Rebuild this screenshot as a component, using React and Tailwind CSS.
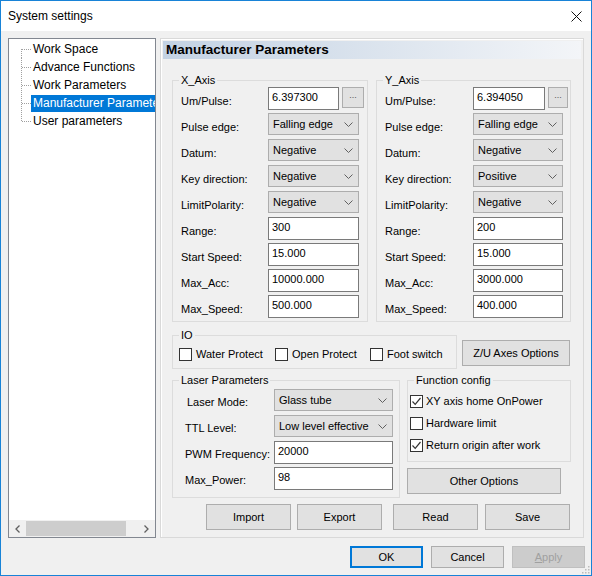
import React from 'react';

const Chevron = () => (
    <svg width="9" height="5" viewBox="0 0 9 5" className="shrink-0">
        <path d="M0.5 0.5 L4.5 4.5 L8.5 0.5" fill="none" stroke="#606060" strokeWidth="1" />
    </svg>
);

const Select = ({ value, w }) => (
    <div className={`flex items-center justify-between h-[22px] pl-[4px] pr-[5px] bg-[#e1e1e1] border border-[#adadad] ${w}`}>
        <span className="whitespace-nowrap">{value}</span>
        <Chevron />
    </div>
);

const Input = ({ value, w }) => (
    <div className={`h-[23px] bg-white border border-[#7a7a7a] pl-[3px] pt-[2px] leading-[14px] ${w}`}>
        {value}
    </div>
);

const Btn = ({ children, className = '' }) => (
    <div className={`flex items-center justify-center bg-[#e1e1e1] border border-[#adadad] ${className}`}>
        {children}
    </div>
);

const Check = ({ checked }) => (
    <div className="w-[13px] h-[13px] shrink-0 bg-white border border-[#333333] flex items-center justify-center">
        {checked && (
            <svg width="11" height="11" viewBox="0 0 11 11">
                <path d="M1.5 5.5 L4.2 8.3 L9.5 2" fill="none" stroke="#333333" strokeWidth="1.2" />
            </svg>
        )}
    </div>
);

const Group = ({ title, className = '', children }) => (
    <fieldset className={`border border-[#dcdcdc] ${className}`}>
        <legend className="ml-[6px] px-[2px] leading-[13px]">{title}</legend>
        {children}
    </fieldset>
);

const axisRows = (d) => [
    ['Um/Pulse:', 'more', d.um],
    ['Pulse edge:', 'select', 'Falling edge'],
    ['Datum:', 'select', 'Negative'],
    ['Key direction:', 'select', d.key],
    ['LimitPolarity:', 'select', 'Negative'],
    ['Range:', 'input', d.range],
    ['Start Speed:', 'input', '15.000'],
    ['Max_Acc:', 'input', d.acc],
    ['Max_Speed:', 'input', d.speed],
];

const AxisGroup = ({ title, data, box, labelW, umW, moreW, ctlW }) => (
    <Group title={title} className={box}>
        <div className="pl-[8px]">
            {axisRows(data).map(([label, kind, value]) => (
                <div key={label} className="flex items-start h-[26px]">
                    <div className={`pt-[7px] leading-[14px] whitespace-nowrap ${labelW}`}>{label}</div>
                    {kind === 'more' && (
                        <>
                            <Input value={value} w={umW} />
                            <Btn className={`ml-[3px] h-[21px] text-[#555] ${moreW}`}>
                                <span className="text-[9px] -mt-[3px]">...</span>
                            </Btn>
                        </>
                    )}
                    {kind === 'select' && <Select value={value} w={ctlW} />}
                    {kind === 'input' && <Input value={value} w={ctlW} />}
                </div>
            ))}
        </div>
    </Group>
);

const treeItems = ['Work Space', 'Advance Functions', 'Work Parameters', 'Manufacturer Parameters', 'User parameters'];

const Tree = () => (
    <div className="w-[148px] h-[500px] shrink-0 bg-white border border-[#828790] flex flex-col overflow-hidden text-[12px]">
        <div className="pt-[1px]">
            {treeItems.map((item, i) => (
                <div key={item} className="flex items-center h-[18px]">
                    <div className="w-[12px] shrink-0" />
                    <svg width="10" height="18" className="shrink-0">
                        <line x1="0.5" y1={i === 0 ? 9 : 0} x2="0.5" y2={i === treeItems.length - 1 ? 9 : 18} stroke="#a0a0a0" strokeDasharray="1 1" />
                        <line x1="1" y1="9.5" x2="10" y2="9.5" stroke="#a0a0a0" strokeDasharray="1 1" />
                    </svg>
                    <span
                        className={`whitespace-nowrap px-[2px] leading-[17px] ${i === 3 ? 'bg-[#0078d7] text-white' : 'text-black'}`}
                    >
                        {item}
                    </span>
                </div>
            ))}
        </div>
        <div className="mt-auto h-[17px] flex items-center bg-[#f0f0f0]">
            <div className="w-[17px] h-full flex items-center justify-center">
                <svg width="5" height="8" viewBox="0 0 5 8">
                    <path d="M4.5 0.5 L1 4 L4.5 7.5" fill="none" stroke="#606060" strokeWidth="1.3" />
                </svg>
            </div>
            <div className="w-[100px] h-[15px] bg-[#cdcdcd]" />
            <div className="ml-auto w-[17px] h-full flex items-center justify-center">
                <svg width="5" height="8" viewBox="0 0 5 8">
                    <path d="M0.5 0.5 L4 4 L0.5 7.5" fill="none" stroke="#606060" strokeWidth="1.3" />
                </svg>
            </div>
        </div>
    </div>
);

const laserRows = [
    ['Laser Mode:', 'select', 'Glass tube', 'pl-[14px]'],
    ['TTL Level:', 'select', 'Low level effective', 'pl-[12px]'],
    ['PWM Frequency:', 'input', '20000', 'pl-[12px]'],
    ['Max_Power:', 'input', '98', 'pl-[12px]'],
];

export default function App() {
    return (
        <div className="w-[592px] h-[576px] relative bg-[#f0f0f0] border border-[#1883d7] flex flex-col text-[11px] text-black font-['Liberation_Sans',Arial,sans-serif]">
            <div className="h-[30px] bg-white flex items-center justify-between pl-[7px] pr-[9px] shrink-0">
                <span className="text-[12px]">System settings</span>
                <svg width="11" height="11" viewBox="0 0 11 11">
                    <path d="M0.5 0.5 L10.5 10.5 M10.5 0.5 L0.5 10.5" stroke="#111" strokeWidth="1" />
                </svg>
            </div>

            <div className="flex mt-[7px] ml-[7px] gap-[4px]">
                <Tree />

                <div className="w-[424px] h-[500px] border border-[#d9d9d9] shadow-[inset_1px_1px_0_#ffffff] flex flex-col">
                    <div className="mx-[2px] mt-[2px] h-[18px] flex items-center pl-[3px] bg-linear-to-r from-[#c3d2e3] to-[#f3f5f8] text-[13.5px] font-bold">
                        Manufacturer Parameters
                    </div>

                    <div className="ml-[11px] mt-[15px] flex gap-[8px] items-start">
                        <AxisGroup
                            title="X_Axis"
                            data={{ um: '6.397300', key: 'Negative', range: '300', acc: '10000.000', speed: '500.000' }}
                            box="w-[196px]"
                            labelW="w-[87px]"
                            umW="w-[71px]"
                            moreW="w-[22px]"
                            ctlW="w-[91px]"
                        />
                        <AxisGroup
                            title="Y_Axis"
                            data={{ um: '6.394050', key: 'Positive', range: '200', acc: '3000.000', speed: '400.000' }}
                            box="w-[195px]"
                            labelW="w-[88px]"
                            umW="w-[72px]"
                            moreW="w-[20px]"
                            ctlW="w-[90px]"
                        />
                    </div>

                    <div className="ml-[11px] mt-[7px] flex items-start">
                        <Group title="IO" className="w-[285px]">
                            <div className="h-[26px] pl-[6px] pt-[6px] flex items-start">
                                {[
                                    ['Water Protect', 'w-[96px]'],
                                    ['Open Protect', 'w-[95px]'],
                                    ['Foot switch', 'w-[80px]'],
                                ].map(([t, w]) => (
                                    <div key={t} className={`flex items-center gap-[4px] ${w}`}>
                                        <Check />
                                        <span className="whitespace-nowrap leading-[13px]">{t}</span>
                                    </div>
                                ))}
                            </div>
                        </Group>
                        <Btn className="ml-[5px] mt-[11px] w-[108px] h-[26px]">Z/U Axes Options</Btn>
                    </div>

                    <div className="ml-[11px] mt-[5px] flex items-start gap-[7px]">
                        <Group title="Laser Parameters" className="w-[228px]">
                            <div className="pt-[2px] pb-[4px]">
                                {laserRows.map(([label, kind, value, pl]) => (
                                    <div key={label} className="flex items-start h-[26px]">
                                        <div className={`w-[101px] pt-[6px] leading-[14px] whitespace-nowrap ${pl}`}>{label}</div>
                                        {kind === 'select' ? (
                                            <Select value={value} w="w-[119px]" />
                                        ) : (
                                            <Input value={value} w="w-[119px]" />
                                        )}
                                    </div>
                                ))}
                            </div>
                        </Group>

                        <div className="flex flex-col">
                            <Group title="Function config" className="w-[164px]">
                                <div className="pl-[2px] pt-[3px] pb-[5px]">
                                    {[
                                        ['XY axis home OnPower', true],
                                        ['Hardware limit', false],
                                        ['Return origin after work', true],
                                    ].map(([t, c]) => (
                                        <div key={t} className="h-[22px] flex items-center gap-[3px]">
                                            <Check checked={c} />
                                            <span className="whitespace-nowrap leading-[13px]">{t}</span>
                                        </div>
                                    ))}
                                </div>
                            </Group>
                            <Btn className="mt-[6px] w-[154px] h-[26px]">Other Options</Btn>
                        </div>
                    </div>

                    <div className="ml-[45px] mt-[6px] flex">
                        <Btn className="w-[85px] h-[26px]">Import</Btn>
                        <Btn className="ml-[6px] w-[85px] h-[26px]">Export</Btn>
                        <Btn className="ml-[11px] w-[85px] h-[26px]">Read</Btn>
                        <Btn className="ml-[7px] w-[85px] h-[26px]">Save</Btn>
                    </div>
                </div>
            </div>

            <div className="mt-[8px] pr-[6px] flex justify-end gap-[8px]">
                <div className="w-[73px] h-[22px] flex items-center justify-center bg-[#e1e1e1] border-2 border-[#0078d7]">OK</div>
                <Btn className="w-[73px] h-[22px]">Cancel</Btn>
                <div className="w-[73px] h-[22px] flex items-center justify-center bg-[#cccccc] border border-[#bfbfbf] text-[#a0a0a0]">
                    <span><span className="underline">A</span>pply</span>
                </div>
            </div>

            <svg width="8" height="8" viewBox="0 0 8 8" className="absolute right-[1px] bottom-[1px]">
                <rect x="6" y="0" width="1.5" height="1.5" fill="#bcbcbc" />
                <rect x="3" y="3" width="1.5" height="1.5" fill="#bcbcbc" />
                <rect x="6" y="3" width="1.5" height="1.5" fill="#bcbcbc" />
                <rect x="0" y="6" width="1.5" height="1.5" fill="#bcbcbc" />
                <rect x="3" y="6" width="1.5" height="1.5" fill="#bcbcbc" />
                <rect x="6" y="6" width="1.5" height="1.5" fill="#bcbcbc" />
            </svg>
        </div>
    );
}
